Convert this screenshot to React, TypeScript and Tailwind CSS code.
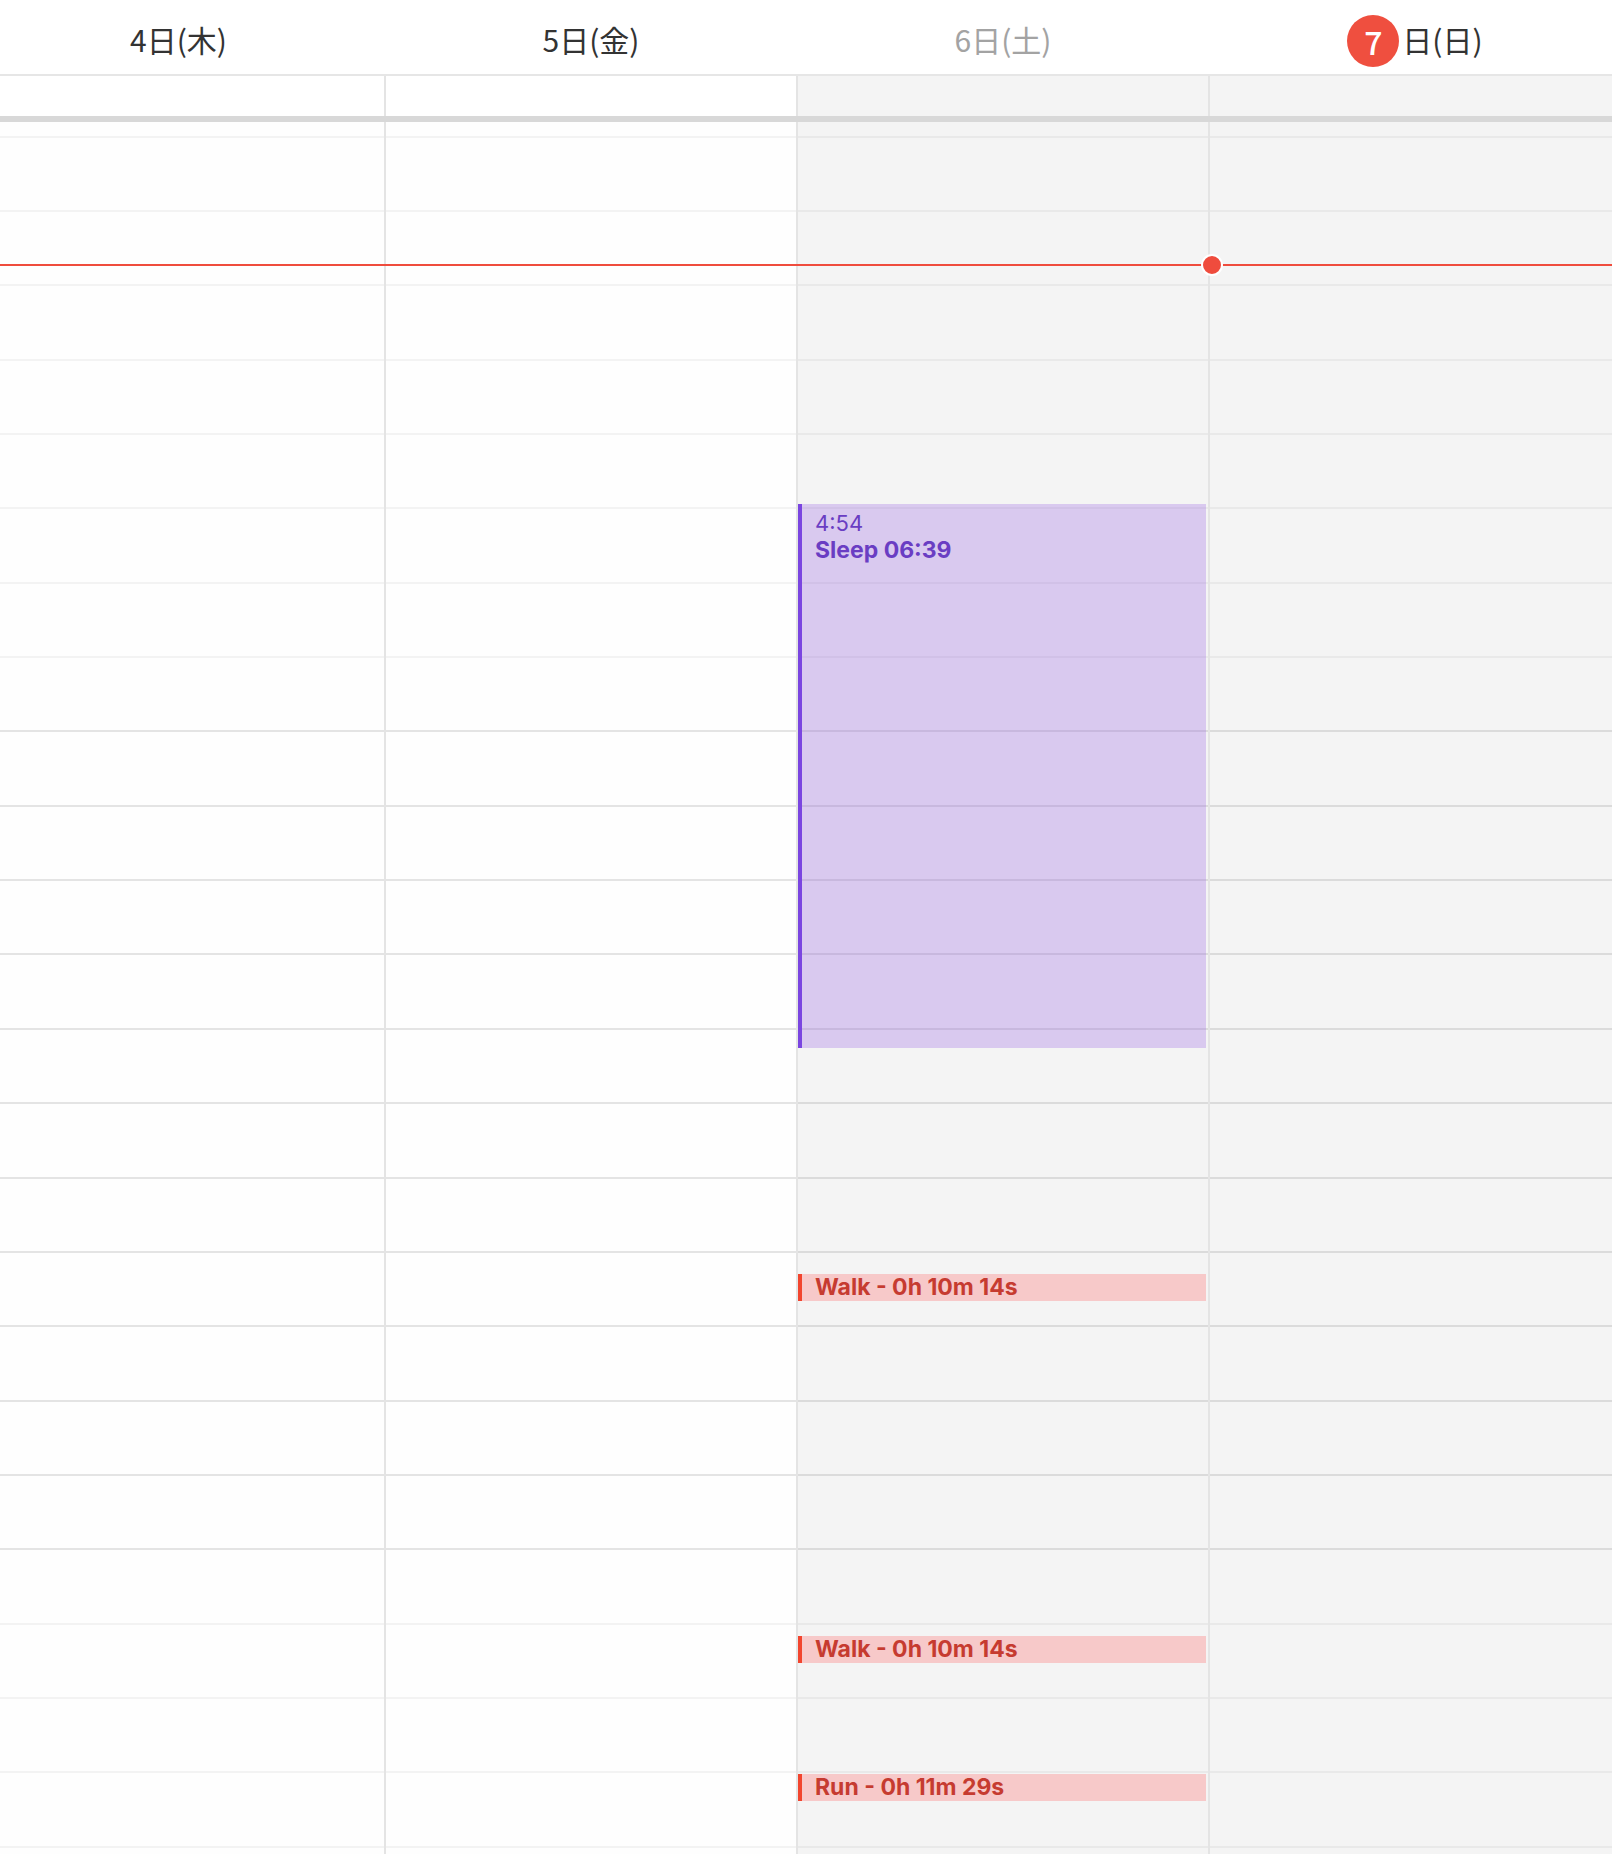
import React from "react";

type Day = {
  label: string;
  weekend: boolean;
  muted?: boolean;
  today?: string;
};

const days: Day[] = [
  { label: "4日(木)", weekend: false },
  { label: "5日(金)", weekend: false },
  { label: "6日(土)", weekend: true, muted: true },
  { label: "日(日)", weekend: true, today: "7" },
];

// hour rows, lines 8..19 are the darker ones
const rows = Array.from({ length: 24 }, (_, i) => i);

function DayHeader({ day, first }: { day: Day; first: boolean }) {
  return (
    <div
      className={
        "flex items-center justify-center pt-[4px] " + (first ? "pr-[27px]" : "pl-[2px]")
      }
    >
      {day.today && (
        <div className="mr-[3px] mt-[4px] flex h-[52px] w-[52px] items-center justify-center rounded-full bg-[#ef4f3f] text-[32px] font-medium leading-none text-white">
          {day.today}
        </div>
      )}
      <span
        className={
          "text-[30px] leading-none " + (day.muted ? "text-[#a3a3a3]" : "text-[#333333]")
        }
      >
        {day.label}
      </span>
    </div>
  );
}

function ActivityBar({ top, text }: { top: number; text: string }) {
  return (
    <div
      className="absolute left-0 right-[2px] h-[27px] border-l-4 border-[#f2452e] bg-[#f7c9c9] pl-[13px] text-[23px] font-bold leading-[27px] text-[#c63b30]"
      style={{ top }}
    >
      {text}
    </div>
  );
}

export default function App() {
  return (
    <div
      className="h-[1854px] w-[1612px] overflow-hidden bg-white"
      style={{ fontFamily: '"Noto Sans CJK JP", "Noto Sans", sans-serif' }}
    >
      <div className="w-[1620px]">
        {/* day headers */}
        <div className="grid h-[76px] grid-cols-[384px_412px_412px_412px] border-b-2 border-[#e6e6e6]">
          {days.map((d, i) => (
            <DayHeader key={i} day={d} first={i === 0} />
          ))}
        </div>

        {/* all-day strip */}
        <div className="grid h-[40px] grid-cols-[384px_412px_412px_412px]">
          {days.map((d, i) => (
            <div
              key={i}
              className={
                (i > 0 ? "border-l-2 border-[#e4e4e4] " : "") +
                (d.weekend ? "bg-[#f4f4f4]" : "bg-white")
              }
            />
          ))}
        </div>
        <div className="h-[6px] bg-[#d8d8d8]" />

        {/* timeline */}
        <div
          className="relative grid h-[1732px] grid-cols-[384px_412px_412px_412px]"
          style={{ fontFamily: 'Inter, "Noto Sans", sans-serif' }}
        >
          {days.map((d, i) => (
            <div
              key={i}
              className={
                "relative flex flex-col pt-[13.5px] " +
                (i > 0 ? "border-l-2 border-[#e4e4e4] " : "") +
                (d.weekend ? "bg-[#f4f4f4]" : "bg-[#fefefe]")
              }
            >
              {rows.map((r) => (
                <div
                  key={r}
                  className={
                    "h-[74.36px] shrink-0 border-t-2 " +
                    (r >= 8 && r <= 19 ? "border-black/10" : "border-black/[0.045]")
                  }
                />
              ))}

              {i === 2 && (
                <>
                  <div className="absolute left-0 right-[2px] top-[382px] h-[544px] border-l-4 border-[#7a45e0] bg-[rgba(166,120,230,0.35)] pl-[13px] pt-[5.5px] text-[#6a3dc3]">
                    <div className="text-[22px] leading-[27px]">4:54</div>
                    <div className="text-[23px] font-bold leading-[27px]">Sleep 06:39</div>
                  </div>
                  <ActivityBar top={1152} text="Walk - 0h 10m 14s" />
                  <ActivityBar top={1514} text="Walk - 0h 10m 14s" />
                  <ActivityBar top={1652} text="Run - 0h 11m 29s" />
                </>
              )}
            </div>
          ))}

          {/* current time */}
          <div className="absolute left-0 right-0 top-[141.7px] h-[2px] bg-[#ef4c3d]" />
          <div className="absolute left-[1201px] top-[131.7px] h-[22px] w-[22px] rounded-full border-2 border-white bg-[#ef4c3d]" />
        </div>
      </div>
    </div>
  );
}
